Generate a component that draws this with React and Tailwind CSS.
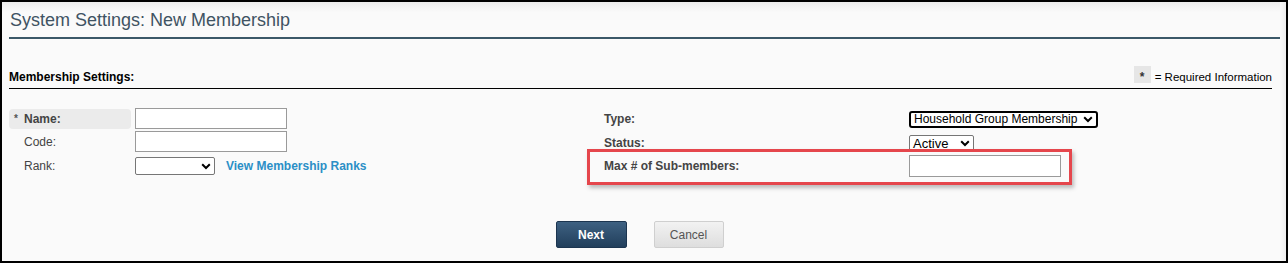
import React from "react";

function Chevron() {
  return (
    <svg width="10" height="7" viewBox="0 0 10 7" className="shrink-0">
      <path d="M1.2 1.3 L5 5 L8.8 1.3" fill="none" stroke="#000" strokeWidth="2" />
    </svg>
  );
}

function FakeSelect({ className, children }) {
  return (
    <div className={`flex items-center justify-between bg-white pl-[3px] pr-[3px] text-black ${className}`}>
      <span className="whitespace-nowrap leading-none">{children}</span>
      <Chevron />
    </div>
  );
}

export default function App() {
  return (
    <div className="relative box-border h-[263px] w-[1288px] overflow-hidden border-2 border-black bg-[#fafafa] font-['Liberation_Sans',Arial,sans-serif]">
      <div className="h-[10px] bg-gradient-to-b from-[#ececec] to-[#fafafa] absolute inset-x-0 top-0" />
      <div className="absolute right-0 top-0 h-full w-[6px] bg-gradient-to-r from-[#fafafa] to-[#eeeeee]" />

      <div className="relative pl-[7px] pr-[6px]">
        <div className="border-b-[2px] border-[#3b5868] pl-[1px] pt-[9px] pb-[8px] text-[18px] leading-[18px] text-[#3f5363]">
          System Settings: New Membership
        </div>

        <div className="mr-[8px] mt-[27px] flex items-end justify-between border-b border-black pb-[5px]">
          <div className="text-[12px] font-bold leading-none text-black">Membership Settings:</div>
          <div className="flex items-end gap-[4px]">
            <div className="flex h-[17px] w-[17px] items-center justify-center bg-[#e6e6e6] text-[12px] font-bold leading-none text-[#333]">
              <span className="mt-[4px]">*</span>
            </div>
            <span className="text-[11.5px] leading-none text-black">= Required Information</span>
          </div>
        </div>

        <div className="mt-[19px] flex">
          <div className="w-[595px]">
            <div className="flex h-[21px] items-center">
              <div className="flex h-[20px] w-[122px] items-center rounded-[4px] bg-[#ebebeb] pl-[5px] text-[12px] font-bold text-[#444]">
                <span className="w-[10px] text-[10px] text-[#555]">*</span>
                <span>Name:</span>
              </div>
              <div className="ml-[4px] h-[21px] w-[152px] border border-[#9a9a9a] bg-white" />
            </div>
            <div className="mt-[2px] flex h-[21px] items-center">
              <div className="w-[122px] pl-[15px] text-[12px] text-[#444]">Code:</div>
              <div className="ml-[4px] h-[21px] w-[152px] border border-[#9a9a9a] bg-white" />
            </div>
            <div className="mt-[5px] flex h-[18px] items-center">
              <div className="w-[122px] pl-[15px] text-[12px] text-[#444]">Rank:</div>
              <FakeSelect className="ml-[4px] h-[18px] w-[80px] rounded-[2px] border border-[#767676] text-[13px]" />
              <span className="ml-[11px] text-[12px] font-bold text-[#2b8fc6]">View Membership Ranks</span>
            </div>
          </div>

          <div className="pt-[3px]">
            <div className="flex h-[16px] items-center">
              <div className="w-[305px] text-[12px] font-bold text-[#444]">Type:</div>
              <FakeSelect className="h-[17px] w-[189px] rounded-[3px] border-2 border-black text-[12px]">
                Household Group Membership
              </FakeSelect>
            </div>
            <div className="mt-[8px] flex h-[16px] items-center">
              <div className="w-[305px] text-[12px] font-bold text-[#444]">Status:</div>
              <FakeSelect className="h-[16px] w-[65px] rounded-[2px] border border-[#767676] text-[13px]">Active</FakeSelect>
            </div>
            <div className="mt-[4px] flex h-[22px] items-center">
              <div className="w-[305px] text-[12px] font-bold text-[#444]">Max # of Sub-members:</div>
              <div className="h-[22px] w-[152px] border border-[#9a9a9a] bg-white" />
            </div>
          </div>
        </div>

        <div className="mt-[44px] flex justify-center gap-[27px] pr-[10px]">
          <button className="h-[27px] w-[71px] rounded-[2px] border border-[#1c3550] bg-gradient-to-b from-[#3e6182] to-[#223f5c] text-[12px] font-bold text-white">
            Next
          </button>
          <button className="h-[27px] w-[70px] rounded-[2px] border border-[#cfcfcf] bg-gradient-to-b from-[#f2f2f2] to-[#dedede] text-[12px] text-[#555]">
            Cancel
          </button>
        </div>
      </div>

      <div className="absolute left-[585px] top-[147px] h-[36px] w-[485px] border-[3px] border-[#e5464c] shadow-[2px_3px_4px_rgba(0,0,0,0.25)]" />
    </div>
  );
}
